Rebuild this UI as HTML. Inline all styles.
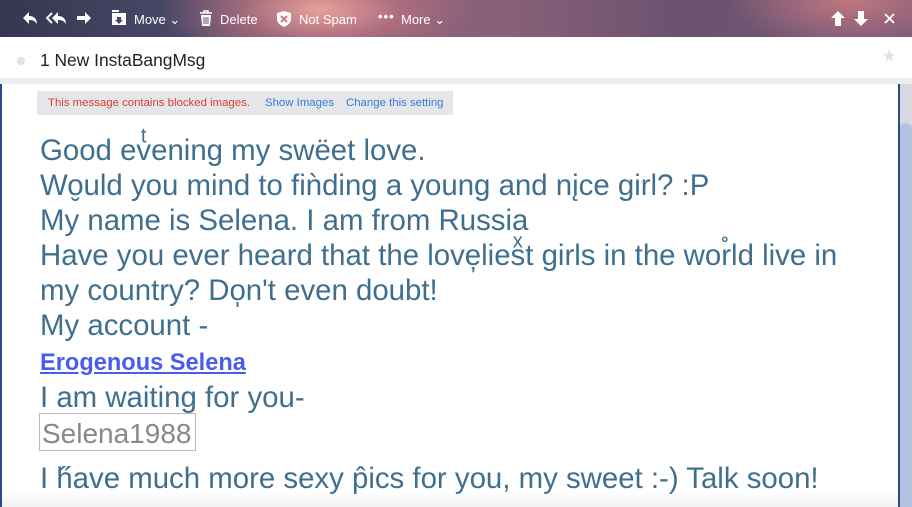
<!DOCTYPE html>
<html><head><meta charset="utf-8"><style>
*{margin:0;padding:0;box-sizing:border-box}
body{width:912px;height:507px;overflow:hidden;background:#fff;font-family:"Liberation Sans",Arial,sans-serif;position:relative}
.tb{position:absolute;left:0;top:0;width:912px;height:37px;
background:radial-gradient(ellipse 160px 60px at 320px 10px,#e8a098 0%,rgba(200,120,130,0.6) 50%,rgba(0,0,0,0) 100%),radial-gradient(ellipse 120px 50px at 850px 0px,#c07880,rgba(0,0,0,0) 100%),linear-gradient(90deg,#353650 0%,#4a4868 20%,#7a5a78 35%,#8a6078 55%,#6a5270 75%,#7a5878 100%)}
.tb span{position:absolute;color:#fff;font-size:13px;top:12px}
.tb svg{position:absolute}
.hdr{position:absolute;top:37px;left:0;width:912px;height:41px;background:#fff}
.strip{position:absolute;top:78px;left:0;width:912px;height:6px;background:#eeeef2}
.lb{position:absolute;left:0;top:84px;width:2px;height:423px;background:#2a4a8a}
.sb{position:absolute;left:898px;top:84px;width:14px;height:423px;background:#d8d8de;border-left:2px solid #2a4a8a}
.thumb{position:absolute;left:900px;top:123px;width:12px;height:384px;background:#b0c2e2;border-radius:6px 6px 0 0}
.blk{position:absolute;left:37px;top:91px;width:416px;height:24px;background:#e4e6ea;font-size:11.4px}
.blk span{position:absolute;top:6px}
.txt{position:absolute;left:40px;color:#3f6f8f;font-size:29.4px;white-space:nowrap;line-height:30px}
</style></head><body>
<div class="tb">
<svg style="left:22px;top:11px" width="16" height="14" viewBox="0 0 16 14"><path d="M7 1L1 7l6 6V9c4 0 6 1 8 4 0-5-3-8-8-8z" fill="#fff"/></svg>
<svg style="left:46px;top:11px" width="22" height="14" viewBox="0 0 22 14"><path d="M6 2L1 7l5 5" stroke="#fff" stroke-width="2" fill="none"/><path d="M12 1L6 7l6 6V9c4 0 6 1 8 4 0-5-3-8-8-8z" fill="#fff"/></svg>
<svg style="left:76px;top:11px" width="16" height="14" viewBox="0 0 16 14"><path d="M9 1l6 6-6 6V9H1V5h8z" fill="#fff"/></svg>
<svg style="left:111px;top:10px" width="16" height="16" viewBox="0 0 16 16"><rect x="1" y="0" width="7" height="2" fill="#fff"/><path d="M1 3h14v12H1z" fill="#fff"/><path d="M6 7h4v3h2l-4 4-4-4h2z" fill="#4a4868"/></svg>
<span style="left:134px">Move ⌄</span>
<svg style="left:199px;top:10px" width="14" height="17" viewBox="0 0 14 17"><path d="M1 3h12M5 3V1h4v2" stroke="#fff" stroke-width="1.6" fill="none"/><path d="M2 5h10l-1 11H3z" fill="#fff"/><path d="M5 7v7M7 7v7M9 7v7" stroke="#6a5070" stroke-width="1"/></svg>
<span style="left:220px">Delete</span>
<svg style="left:276px;top:10px" width="16" height="17" viewBox="0 0 16 17"><path d="M8 1l7 2v6c0 4-3 6-7 8-4-2-7-4-7-8V3z" fill="#fff"/><path d="M5 6l6 6M11 6l-6 6" stroke="#c08088" stroke-width="2"/></svg>
<span style="left:299px">Not Spam</span>
<span style="left:378px;top:9px;font-weight:bold;letter-spacing:1px">•••</span>
<span style="left:401px">More ⌄</span>
<svg style="left:831px;top:11px" width="14" height="15" viewBox="0 0 14 15"><path d="M7 0l7 7H10v8H4V7H0z" fill="#fff"/></svg>
<svg style="left:854px;top:11px" width="14" height="15" viewBox="0 0 14 15"><path d="M7 15l7-7H10V0H4v8H0z" fill="#fff"/></svg>
<svg style="left:884px;top:13px" width="11" height="11" viewBox="0 0 11 11"><path d="M1 1l9 9M10 1l-9 9" stroke="#fff" stroke-width="1.8"/></svg>
</div>
<div class="hdr">
<div style="position:absolute;left:17px;top:20px;width:8px;height:8px;border-radius:50%;background:#e2e2e2"></div>
<div style="position:absolute;left:40px;top:13px;font-size:17.4px;color:#222">1 New InstaBangMsg</div>
<div style="position:absolute;left:882px;top:9px;font-size:16px;color:#e0e0e0">★</div>
</div>
<div class="strip"></div>
<div class="lb"></div>
<div class="sb"></div><div class="thumb"></div>
<div class="blk"><span style="left:11px;color:#e03a30">This message contains blocked images.</span><span style="left:228px;color:#3a7ad8">Show Images</span><span style="left:309px;color:#3a7ad8">Change this setting</span></div>
<div class="txt" style="top:136px">Good ev&#x036D;ening my swe&#x0308;et love.</div>
<div class="txt" style="top:171px">Wo&#x032E;uld you mind to fin&#x0300;ding a young and ni&#x0328;ce girl? :P</div>
<div class="txt" style="top:206px">My name is Selena. I am from Russia</div>
<div class="txt" style="top:241px">Have you ever heard that the love&#x0326;lies&#x036F;t girls in the wor&#x030A;ld live in</div>
<div class="txt" style="top:276px">my country? Do&#x0329;n't even doubt!</div>
<div class="txt" style="top:311px">My account -</div>
<div class="txt" style="top:348px;font-size:23.6px;font-weight:bold;color:#4a5cf0;text-decoration:underline">Erogenous Selena</div>
<div class="txt" style="top:383px">I am waiting for you-</div>
<div class="txt" style="top:413px;left:39px;width:157px;height:38px;padding:4px 2px 0 2px;border:1px solid #bbb;color:#888;line-height:32px;font-size:28px">Selena1988</div>
<div class="txt" style="top:464px">I h&#x030B;ave much more sexy p&#x0302;ics for you, my sweet :-) Talk soon!</div>
<div style="position:absolute;left:2px;top:492px;width:896px;height:15px;background:linear-gradient(rgba(255,255,255,0),#f2f2f4)"></div>
</body></html>
